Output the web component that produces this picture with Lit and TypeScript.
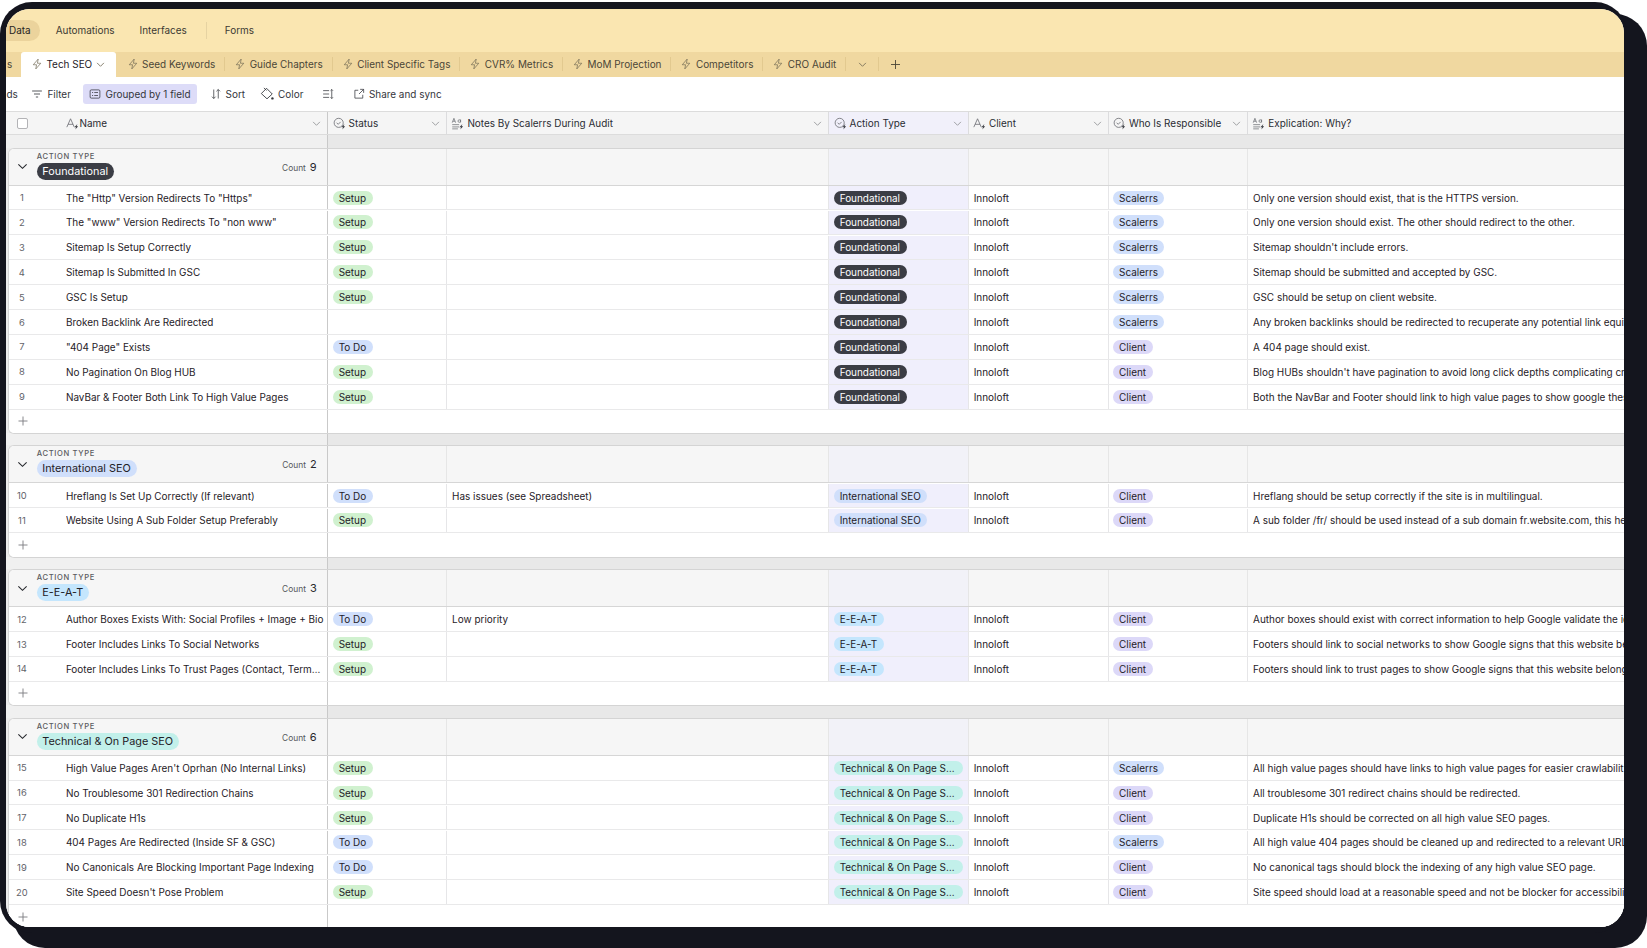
import { LitElement, html, css, svg } from "lit";
import { customElement } from "lit/decorators.js";

const boltI = svg`<path d="M9.6 1.4 3 9h4.4l-1 5.6L13 7H8.6z" fill="none" stroke="currentColor" stroke-width="0.9" stroke-linejoin="round"/>`;
const ic = (body: unknown, size = 12) =>
  html`<svg class="ic" width="${size}" height="${size}" viewBox="0 0 16 16">${body}</svg>`;
const chev = (size = 9) =>
  html`<svg class="ic chev" width="${size}" height="${size}" viewBox="0 0 10 10"><path d="M1.2 3.2 5 7l3.8-3.8" fill="none" stroke="currentColor" stroke-width="0.9"/></svg>`;
const miniBolt = svg`<path d="M14 8.6 10.4 12.6h2l-1 2.9 3.6-4.1h-2z" fill="#3a3c42"/>`;
const fieldA = ic(svg`<path d="M1 12.5 5.6 2.2 10.2 12.5M2.6 9h6" fill="none" stroke="#6b6d73" stroke-width="1"/>${miniBolt}`, 13);
const fieldS = ic(svg`<circle cx="7" cy="7.2" r="5.6" fill="none" stroke="#6b6d73" stroke-width="1"/><path d="M4.4 7l2 2 3-3" fill="none" stroke="#6b6d73" stroke-width="1"/>${miniBolt}`, 13);
const fieldT = ic(svg`<path d="M1.5 7 3.6 1.6 5.7 7M2.2 5.2h2.8M10.2 3.4a1.6 1.6 0 1 0 0 3.2 1.6 1.6 0 0 0 0-3.2zM11.8 3v3.8M1.5 9.4h8.5M1.5 12.2h8.5M1.5 14.6h7" fill="none" stroke="#6b6d73" stroke-width="0.9"/>${miniBolt}`, 13);

type Row = [string, string, string, string, string];
type Group = { label: string; cls: string; rows: Row[] };

const groups: Group[] = [
  { label: "Foundational", cls: "dark", rows: [
    ['The "Http" Version Redirects To "Https"', "Setup", "", "Scalerrs", "Only one version should exist, that is the HTTPS version."],
    ['The "www" Version Redirects To "non www"', "Setup", "", "Scalerrs", "Only one version should exist. The other should redirect to the other."],
    ["Sitemap Is Setup Correctly", "Setup", "", "Scalerrs", "Sitemap shouldn't include errors."],
    ["Sitemap Is Submitted In GSC", "Setup", "", "Scalerrs", "Sitemap should be submitted and accepted by GSC."],
    ["GSC Is Setup", "Setup", "", "Scalerrs", "GSC should be setup on client website."],
    ["Broken Backlink Are Redirected", "", "", "Scalerrs", "Any broken backlinks should be redirected to recuperate any potential link equity."],
    ['"404 Page" Exists', "To Do", "", "Client", "A 404 page should exist."],
    ["No Pagination On Blog HUB", "Setup", "", "Client", "Blog HUBs shouldn't have pagination to avoid long click depths complicating crawling."],
    ["NavBar & Footer Both Link To High Value Pages", "Setup", "", "Client", "Both the NavBar and Footer should link to high value pages to show google these pages."],
  ]},
  { label: "International SEO", cls: "blue", rows: [
    ["Hreflang Is Set Up Correctly (If relevant)", "To Do", "Has issues (see Spreadsheet)", "Client", "Hreflang should be setup correctly if the site is in multilingual."],
    ["Website Using A Sub Folder Setup Preferably", "Setup", "", "Client", "A sub folder /fr/ should be used instead of a sub domain fr.website.com, this helps."],
  ]},
  { label: "E-E-A-T", cls: "sky", rows: [
    ["Author Boxes Exists With: Social Profiles + Image + Bio", "To Do", "Low priority", "Client", "Author boxes should exist with correct information to help Google validate the identity."],
    ["Footer Includes Links To Social Networks", "Setup", "", "Client", "Footers should link to social networks to show Google signs that this website belongs."],
    ["Footer Includes Links To Trust Pages (Contact, Terms, About)", "Setup", "", "Client", "Footers should link to trust pages to show Google signs that this website belongs."],
  ]},
  { label: "Technical & On Page SEO", cls: "teal", rows: [
    ["High Value Pages Aren't Oprhan (No Internal Links)", "Setup", "", "Scalerrs", "All high value pages should have links to high value pages for easier crawlability."],
    ["No Troublesome 301 Redirection Chains", "Setup", "", "Client", "All troublesome 301 redirect chains should be redirected."],
    ["No Duplicate H1s", "Setup", "", "Client", "Duplicate H1s should be corrected on all high value SEO pages."],
    ["404 Pages Are Redirected (Inside SF & GSC)", "To Do", "", "Scalerrs", "All high value 404 pages should be cleaned up and redirected to a relevant URL."],
    ["No Canonicals Are Blocking Important Page Indexing", "To Do", "", "Client", "No canonical tags should block the indexing of any high value SEO page."],
    ["Site Speed Doesn't Pose Problem", "Setup", "", "Client", "Site speed should load at a reasonable speed and not be blocker for accessibility."],
  ]},
];

const tabs = ["Seed Keywords", "Guide Chapters", "Client Specific Tags", "CVR% Metrics", "MoM Projection", "Competitors", "CRO Audit"];
const pillCls: Record<string, string> = { Setup: "green", "To Do": "blue", Scalerrs: "blue", Client: "purple" };

@customElement("app-root")
export class AppRoot extends LitElement {
  static styles = css`
    :host { display: block; width: 1647px; height: 948px; overflow: hidden; background: #fff; position: relative;
      font-family: Inter, "Liberation Sans", sans-serif; font-size: 9.95px; color: #1f2127; }
    .back { margin: 14px 0 0 13px; width: 1634px; height: 934px; background: #14151e; border-radius: 32px; }
    .front { position: absolute; left: 0; top: 2px; width: 1627px; height: 931px; padding: 6.5px 0 0 6.4px; box-sizing: border-box;
      background: #14151e; border-radius: 32px; }
    .screen { width: 1617.6px; height: 918.3px; border-radius: 24px; overflow: hidden; background: #fff; display: flex; flex-direction: column; }
    .ic { flex: none; display: block; }
    .nav { height: 43.5px; background: #fae6b1; display: flex; align-items: center; flex: none; color: #3c3a33; }
    .nav-item { margin-right: 25px; }
    .nav-data { background: #ebd39c; border-radius: 0 11px 11px 0; height: 21.5px; width: 33.6px; padding-left: 2.6px; box-sizing: border-box;
      display: flex; align-items: center; margin-right: 15.7px; color: #26241f; }
    .nav-sep { width: 1px; height: 17px; background: #e6d3a2; margin: 0 18px 0 -6px; }
    .tabs { height: 24.5px; background: #f0d8a0; display: flex; flex: none; align-items: center; color: #4b4637; }
    .tab-clip { width: 15px; padding-left: 0.6px; box-sizing: border-box; }
    .tab { display: flex; align-items: center; gap: 3.6px; padding: 0 8.8px 0 9px; height: 14px; border-right: 1px solid #e2c98f; }
    .tab .ic { color: #6d6650; }
    .tab.active { background: #fff; height: 24.5px; border-radius: 3px 3px 0 0; border: none; padding: 0 11px 0 9.5px; margin-right: 1.7px; color: #1f2127; align-self: flex-end; }
    .tab.more { padding: 0 11.5px 0 11.5px; }
    .tab.last { border-right: none; padding-left: 10.5px; }
    .toolbar { height: 34px; flex: none; display: flex; align-items: center; background: #fff; color: #34363c; }
    .tool { display: flex; align-items: center; gap: 4px; }
    .tool.on { background: #dddcf8; height: 20px; border-radius: 3px; padding: 0 6px; gap: 5px; box-sizing: border-box; }
    .row, .ghead, .add { display: grid; grid-template-columns: 318.9px 118.8px 382.2px 139.4px 140px 139.4px 1fr; }
    .head { display: grid; grid-template-columns: 321.9px 118.8px 382.2px 139.4px 140px 139.4px 1fr; height: 24.5px; flex: none; background: #f5f5f5;
      border-top: 1px solid #dcdcdc; border-bottom: 1px solid #dcdcdc; box-sizing: border-box; color: #2a2c32; }
    .h { display: flex; align-items: center; gap: 3px; padding-left: 4.3px; padding-top: 1px; border-right: 1px solid #dcdcde; min-width: 0; }
    .h .chev { margin-left: auto; margin-right: 6px; color: #8b8c90; }
    .h.act { background: #f1f0fa; }
    .h.name { padding-left: 0; border-right-color: #c9c9c9; gap: 0.5px; }
    .cb { width: 9px; height: 9px; border: 1px solid #b3b3b6; background: #fff; border-radius: 2px; margin: 0 37.5px 0 10.5px; flex: none; box-sizing: content-box; }
    .body { flex: 1; min-height: 0; background: #ececec; }
    .gap { height: 12.5px; display: flex; }
    .gap i { display: block; width: 321.9px; background: #f0f0f0; border-right: 1px solid #c9c9c9; box-sizing: border-box; }
    .gap b { display: block; flex: 1; background: #e8e8e8; }
    .sgroup { margin-left: 2px; border-left: 1px solid #d4d4d4; border-top: 1px solid #d4d4d4; border-bottom: 1px solid #d4d4d4;
      border-radius: 6px 0 0 6px; overflow: hidden; background: #fff; margin-bottom: -1px; position: relative; }
    .ghead { height: 37px; background: #f6f6f6; border-bottom: 1px solid #d6d6d6; box-sizing: border-box; }
    .gc { border-right: 1px solid #e6e6e6; }
    .gc.act { background: #f2f2f8; }
    .gc.first { border-right-color: #c9c9c9; display: flex; align-items: center; position: relative; padding-left: 8px; }
    .gtext { margin-left: 8.4px; display: flex; flex-direction: column; gap: 1px; padding-bottom: 2px; }
    .glabel { font-size: 7.6px; letter-spacing: 0.65px; color: #5a5b60; line-height: 10px; font-weight: 500; }
    .gpill { align-self: flex-start; height: 17px; line-height: 17px; padding: 0 6px 0 5.5px; border-radius: 9px; font-size: 10.85px; }
    .count { margin-left: auto; margin-right: 10.6px; display: flex; align-items: baseline; gap: 4px; font-size: 8.4px; color: #55565b; }
    .count span { font-size: 11px; color: #26282d; }
    .row { height: 24.9px; box-sizing: border-box; border-bottom: 1.4px solid #e9e9ea; background: #fff; padding-top: 0.3px; }
    .c { display: flex; align-items: center; padding-left: 5px; border-right: 1.2px solid #e6e6e8; min-width: 0; white-space: nowrap; overflow: hidden; }
    .c.first { border-right-color: #c9c9c9; padding-left: 0; }
    .c.act { background: #f0effc; }
    .num { width: 25px; flex: none; text-align: center; color: #62636a; font-size: 9.4px; box-sizing: border-box; margin-right: 31.5px; }
    .nm { overflow: hidden; text-overflow: ellipsis; padding-right: 3px; }
    .pill { height: 14px; line-height: 14px; padding: 0 6.6px 0 6px; border-radius: 7px; display: block; overflow: hidden; text-overflow: ellipsis; white-space: nowrap; max-width: 129.4px; box-sizing: border-box; margin-left: -0.6px; }
    .green { background: #d0f1cf; }
    .blue { background: #d0dffb; }
    .purple { background: #dcd8f8; }
    .dark { background: #3b3d45; color: #fff; }
    .sky { background: #c4e6fd; }
    .teal { background: #c2f0ea; }
    .add { height: 23.4px; background: #fff; color: #7b7c80; }
    .add .first { padding-left: 8.5px; display: flex; align-items: center; border-right: 1px solid #c9c9c9; }
    .add svg { display: block; }
  `;

  private groupView(g: Group, start: number) {
    return html`
      <div class="sgroup">
        <div class="ghead">
          <div class="gc first">
            <svg class="ic" width="11" height="11" viewBox="0 0 12 12"><path d="M1.5 3.6 6 8l4.5-4.4" fill="none" stroke="#26282d" stroke-width="1.2"/></svg>
            <div class="gtext">
              <div class="glabel">ACTION TYPE</div>
              <div class="gpill ${g.cls}">${g.label}</div>
            </div>
            <div class="count">Count <span>${g.rows.length}</span></div>
          </div>
          <div class="gc"></div><div class="gc"></div><div class="gc act"></div><div class="gc"></div><div class="gc"></div><div class="gc" style="border:none"></div>
        </div>
        ${g.rows.map((r, i) => html`
          <div class="row">
            <div class="c first"><span class="num">${start + i}</span><span class="nm">${r[0]}</span></div>
            <div class="c">${r[1] ? html`<span class="pill ${pillCls[r[1]]}">${r[1]}</span>` : ""}</div>
            <div class="c">${r[2]}</div>
            <div class="c act"><span class="pill ${g.cls}">${g.label}</span></div>
            <div class="c">Innoloft</div>
            <div class="c"><span class="pill ${pillCls[r[3]]}">${r[3]}</span></div>
            <div class="c" style="border:none">${r[4]}</div>
          </div>`)}
        <div class="add">
          <div class="first"><svg width="10" height="10" viewBox="0 0 10 10"><path d="M5 .5v9M.5 5h9" stroke="currentColor" stroke-width="0.9"/></svg></div>
        </div>
      </div>`;
  }

  render() {
    let n = 1;
    return html`
      <div class="back"></div>
      <div class="front">
        <div class="screen">
          <div class="nav">
            <div class="nav-data">Data</div>
            <div class="nav-item">Automations</div>
            <div class="nav-item">Interfaces</div>
            <div class="nav-sep"></div>
            <div class="nav-item">Forms</div>
          </div>
          <div class="tabs">
            <div class="tab-clip">s</div>
            <div class="tab active">${ic(boltI)}<span>Tech SEO</span>${chev()}</div>
            ${tabs.map((t) => html`<div class="tab">${ic(boltI)}<span>${t}</span></div>`)}
            <div class="tab more">${chev()}</div>
            <div class="tab last"><svg width="11" height="11" viewBox="0 0 11 11"><path d="M5.5 1v9M1 5.5h9" stroke="currentColor" stroke-width="0.9"/></svg></div>
          </div>
          <div class="toolbar">
            <div style="width:25px">ds</div>
            <div class="tool" style="margin-right:11.6px">
              ${ic(svg`<path d="M1.5 4h13M4 8h8M6.5 12h3" stroke="currentColor" stroke-width="1.1"/>`)}Filter
            </div>
            <div class="tool on" style="margin-right:13px">
              ${ic(svg`<rect x="1.5" y="2.5" width="13" height="11" rx="1.5" fill="none" stroke="currentColor"/><path d="M4 6h1.5M7 6h5M4 10h1.5M7 10h5" stroke="currentColor"/>`)}Grouped by 1 field
            </div>
            <div class="tool" style="margin-right:15px">
              ${ic(svg`<path d="M5 2v12M2.6 11.6 5 14l2.4-2.4M11 14V2M8.6 4.4 11 2l2.4 2.4" fill="none" stroke="currentColor"/>`)}Sort
            </div>
            <div class="tool" style="margin-right:19px">
              ${ic(svg`<path d="M7.5 1.5 14 8l-6 5.5L1.5 7.5z M4.5 1 7.5 4" fill="none" stroke="currentColor"/><circle cx="14.2" cy="13" r="1.4" fill="currentColor"/>`, 14)}Color
            </div>
            <div class="tool" style="margin-right:18.5px">
              ${ic(svg`<path d="M1.5 3.5h8M1.5 8h8M1.5 12.5h8M13 2v12M11.4 3.6 13 2l1.6 1.6M11.4 12.4 13 14l1.6-1.6" fill="none" stroke="currentColor"/>`)}
            </div>
            <div class="tool">
              ${ic(svg`<path d="M7 3H2.5v10.5H13V9M9.5 1.8h4.7v4.7M14.2 1.8 8 8" fill="none" stroke="currentColor"/>`)}Share and sync
            </div>
          </div>
          <div class="head">
            <div class="h name"><span class="cb"></span>${fieldA}<span>Name</span>${chev()}</div>
            <div class="h">${fieldS}<span>Status</span>${chev()}</div>
            <div class="h">${fieldT}<span>Notes By Scalerrs During Audit</span>${chev()}</div>
            <div class="h act">${fieldS}<span>Action Type</span>${chev()}</div>
            <div class="h">${fieldA}<span>Client</span>${chev()}</div>
            <div class="h">${fieldS}<span>Who Is Responsible</span>${chev()}</div>
            <div class="h" style="border:none">${fieldT}<span>Explication: Why?</span></div>
          </div>
          <div class="body">
            ${groups.map((g) => {
              const v = this.groupView(g, n);
              n += g.rows.length;
              return html`<div class="gap"><i></i><b></b></div>${v}`;
            })}
          </div>
        </div>
      </div>
    `;
  }
}
